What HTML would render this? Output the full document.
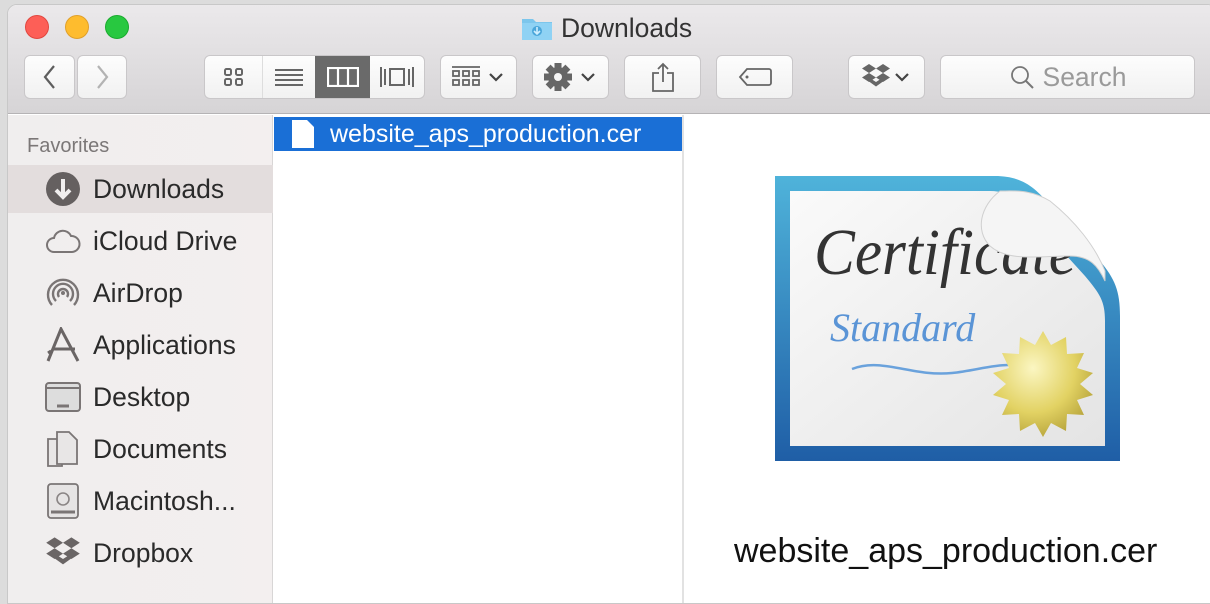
<!DOCTYPE html>
<html><head><meta charset="utf-8">
<style>
*{margin:0;padding:0;box-sizing:border-box}
body{width:1210px;height:584px;overflow:hidden;background:#dcdcdc;font-family:"Liberation Sans",sans-serif;position:relative}
.win{position:absolute;left:7px;top:4px;width:1210px;height:600px;border-radius:10px 10px 0 0;background:#fff;overflow:hidden;border:1px solid #c8c8c8}
.tb{position:absolute;left:0;top:0;width:100%;height:109px;background:linear-gradient(#ebe9eb,#d6d4d6);border-bottom:1px solid #b5b3b5}
.dot{position:absolute;top:10px;width:24px;height:24px;border-radius:50%}
.btn{position:absolute;top:50px;height:44px;background:linear-gradient(#fdfdfd,#f1f1f1);border:1px solid #c9c7c9;border-radius:6px;display:flex;align-items:center;justify-content:center}
.abs{position:absolute}
.side{position:absolute;left:0;top:110px;width:265px;height:500px;background:linear-gradient(90deg,#f0eeee,#f3efef);border-right:1px solid #d8d6d6}
.it{position:absolute;left:0;width:265px;height:48px;display:flex;align-items:center;font-size:26.5px;color:#2a2a2a}
.it svg{position:absolute;left:37px}
.it span{position:absolute;left:85px}
</style></head><body>
<div class="win">
<div class="tb">
 <div class="dot" style="left:17px;background:#fd5f57;border:1px solid #e1473f"></div>
 <div class="dot" style="left:57px;background:#febc2e;border:1px solid #e0a02a"></div>
 <div class="dot" style="left:97px;background:#28c840;border:1px solid #1aab2e"></div>
 <svg class="abs" style="left:513px;top:10px" width="32" height="26" viewBox="0 0 32 26"><path d="M1 4h11l3 3h16v18H1z" fill="#7cc6ec"/><rect x="1" y="8" width="30" height="17" fill="#8fd2f4"/><circle cx="16" cy="16" r="5" fill="#4aa6da"/><path d="M16 12v7M13 16l3 3 3-3" stroke="#cfeeff" stroke-width="1.6" fill="none"/></svg>
 <div class="abs" style="left:553px;top:8px;font-size:26.5px;color:#333">Downloads</div>

 <div class="btn" style="left:16px;width:51px"><svg width="16" height="26"><path d="M12 2L3 13l9 11" stroke="#5e5e5e" stroke-width="2.2" fill="none"/></svg></div>
 <div class="btn" style="left:69px;width:50px"><svg width="16" height="26"><path d="M4 2l9 11-9 11" stroke="#b3b3b3" stroke-width="2.2" fill="none"/></svg></div>

 <div class="btn" style="left:196px;width:221px;overflow:hidden;justify-content:flex-start">
  <div style="width:59px;height:44px;display:flex;align-items:center;justify-content:center;border-right:1px solid #ddd"><svg width="22" height="20"><g fill="none" stroke="#666" stroke-width="2"><rect x="2" y="2" width="6" height="6" rx="1.5"/><rect x="13" y="2" width="6" height="6" rx="1.5"/><rect x="2" y="12" width="6" height="6" rx="1.5"/><rect x="13" y="12" width="6" height="6" rx="1.5"/></g></svg></div>
  <div style="width:52px;height:44px;display:flex;align-items:center;justify-content:center"><svg width="28" height="20"><g stroke="#666" stroke-width="2"><path d="M0 3h28M0 8h28M0 13h28M0 18h28"/></g></svg></div>
  <div style="width:56px;height:44px;background:#6a6a6a;display:flex;align-items:center;justify-content:center"><svg width="32" height="20"><g fill="none" stroke="#fff" stroke-width="2.2"><rect x="1" y="1" width="30" height="18"/><path d="M11 1v18M21 1v18"/></g></svg></div>
  <div style="width:54px;height:44px;display:flex;align-items:center;justify-content:center"><svg width="36" height="24"><g fill="none" stroke="#666" stroke-width="2"><rect x="11" y="4" width="14" height="16"/><path d="M2 2v20M6 4v16M30 4v16M34 2v20"/></g></svg></div>
 </div>
 <div class="btn" style="left:432px;width:77px"><svg width="30" height="24"><g fill="none" stroke="#666" stroke-width="1.8"><path d="M1 2h28"/><rect x="2" y="6" width="6" height="5"/><rect x="12" y="6" width="6" height="5"/><rect x="22" y="6" width="6" height="5"/><rect x="2" y="15" width="6" height="5"/><rect x="12" y="15" width="6" height="5"/><rect x="22" y="15" width="6" height="5"/></g></svg><svg width="20" height="12" style="margin-left:6px"><path d="M3 3l6 6 6-6" stroke="#444" stroke-width="2.2" fill="none"/></svg></div>
 <div class="btn" style="left:524px;width:77px"><svg width="30" height="30" viewBox="-15 -15 30 30"><g fill="#666"><circle r="10"/><rect x="-3.5" y="-14" width="7" height="28"/><rect x="-3.5" y="-14" width="7" height="28" transform="rotate(45)"/><rect x="-3.5" y="-14" width="7" height="28" transform="rotate(90)"/><rect x="-3.5" y="-14" width="7" height="28" transform="rotate(135)"/></g><circle r="4" fill="#f5f5f5"/></svg><svg width="20" height="12" style="margin-left:6px"><path d="M3 3l6 6 6-6" stroke="#444" stroke-width="2.2" fill="none"/></svg></div>
 <div class="btn" style="left:616px;width:77px"><svg width="24" height="30"><g fill="none" stroke="#666" stroke-width="1.8"><path d="M8 11H2v18h20V11h-6M12 20V2M7 7l5-5 5 5"/></g></svg></div>
 <div class="btn" style="left:708px;width:77px"><svg width="34" height="20"><path d="M9 2h22a2 2 0 0 1 2 2v12a2 2 0 0 1-2 2H9L2 10z" fill="none" stroke="#666" stroke-width="1.8"/><circle cx="9" cy="10" r="1.5" fill="#666"/></svg></div>
 <div class="btn" style="left:840px;width:77px"><svg width="30" height="28" viewBox="0 0 30 28"><g fill="#666"><path d="M8 1l7 4.5-7 4.5-7-4.5zM22 1l7 4.5-7 4.5-7-4.5zM8 10l7 4.5-7 4.5-7-4.5zM22 10l7 4.5-7 4.5-7-4.5zM15 19l7-4.5 0 4-7 5-7-5 0-4z"/></g></svg><svg width="20" height="12" style="margin-left:2px"><path d="M3 3l6 6 6-6" stroke="#444" stroke-width="2.2" fill="none"/></svg></div>
 <div class="btn" style="left:932px;width:255px"><svg width="26" height="26"><circle cx="11" cy="11" r="8" fill="none" stroke="#777" stroke-width="1.8"/><path d="M17 17l7 7" stroke="#777" stroke-width="2"/></svg><span style="font-size:26.5px;color:#9a9a9a;margin-left:8px">Search</span></div>
</div>

<div class="side">
 <div class="abs" style="left:19px;top:20px;font-size:20px;color:#7b7777">Favorites</div>
 <div class="it" style="top:50px;background:#e3dddd"><svg width="36" height="36"><circle cx="18" cy="18" r="17" fill="#656060"/><path d="M18 8v18M11 19l7 7 7-7" stroke="#f0eeee" stroke-width="4" fill="none"/></svg><span>Downloads</span></div>
 <div class="it" style="top:102px"><svg width="36" height="36"><path d="M9 29a7 7 0 0 1 0-14 9 9 0 0 1 17-2 8 8 0 0 1 1 16z" fill="none" stroke="#7a7575" stroke-width="2"/></svg><span>iCloud Drive</span></div>
 <div class="it" style="top:154px"><svg width="36" height="36"><g fill="none" stroke="#7a7575" stroke-width="2.4"><path d="M7 30a15 15 0 1 1 22 0"/><path d="M11 26a10 10 0 1 1 14 0"/><path d="M14 22a5 5 0 1 1 8 0"/></g><circle cx="18" cy="18" r="2" fill="#7a7575"/></svg><span>AirDrop</span></div>
 <div class="it" style="top:206px"><svg width="36" height="36"><g stroke="#6a6565" stroke-width="3" fill="none"><path d="M3 34L16 2l17 32M8 22h22M3 26l3-2"/></g></svg><span>Applications</span></div>
 <div class="it" style="top:258px"><svg width="36" height="36"><rect x="1" y="4" width="34" height="28" rx="3" fill="#ddd" stroke="#7a7575" stroke-width="2"/><path d="M2 9h32" stroke="#7a7575" stroke-width="2"/><path d="M12 27h12" stroke="#7a7575" stroke-width="3"/></svg><span>Desktop</span></div>
 <div class="it" style="top:310px"><svg width="36" height="36"><g fill="#e8e6e6" stroke="#7a7575" stroke-width="1.8"><path d="M3 8h14v27H3z"/><path d="M12 1h12l8 8v24H12z"/></g></svg><span>Documents</span></div>
 <div class="it" style="top:362px"><svg width="36" height="36"><rect x="3" y="1" width="30" height="34" rx="3" fill="#e6e4e4" stroke="#7a7575" stroke-width="1.8"/><circle cx="18" cy="16" r="6" fill="none" stroke="#8a8585" stroke-width="1.6"/><path d="M6 29h24" stroke="#7a7575" stroke-width="3"/></svg><span>Macintosh...</span></div>
 <div class="it" style="top:414px"><svg width="36" height="36" viewBox="0 0 30 28"><g fill="#6a6565"><path d="M8 1l7 4.5-7 4.5-7-4.5zM22 1l7 4.5-7 4.5-7-4.5zM8 10l7 4.5-7 4.5-7-4.5zM22 10l7 4.5-7 4.5-7-4.5zM15 19l7-4.5 0 4-7 5-7-5 0-4z"/></g></svg><span>Dropbox</span></div>
</div>

<div class="abs" style="left:266px;top:112px;width:408px;height:34px;background:#1a6fd6"></div>
<svg class="abs" style="left:283px;top:114px" width="24" height="30"><path d="M1 1h15l7 7v21H1z" fill="#fff"/></svg>
<div class="abs" style="left:322px;top:115px;font-size:25px;color:#fff">website_aps_production.cer</div>
<div class="abs" style="left:674px;top:110px;width:2px;height:500px;background:#e2e2e2"></div>

<svg class="abs" style="left:752px;top:161px" width="380" height="310" viewBox="760 165 380 310">
 <defs>
  <linearGradient id="bl" x1="0" y1="0" x2="0" y2="1"><stop offset="0" stop-color="#4fb3da"/><stop offset="1" stop-color="#1f5ea6"/></linearGradient>
  <linearGradient id="pp" x1="0" y1="0" x2="1" y2="1"><stop offset="0" stop-color="#fafafa"/><stop offset="1" stop-color="#e4e4e4"/></linearGradient>
  <radialGradient id="gd" cx=".4" cy=".35" r=".7"><stop offset="0" stop-color="#fbf6c2"/><stop offset=".6" stop-color="#e2d263"/><stop offset="1" stop-color="#b5a23a"/></radialGradient>
 </defs>
 <path d="M775 175h220c25 0 40 10 55 30l50 55c15 18 20 30 20 55v145H775z" fill="url(#bl)"/>
 <path d="M790 190h200c20 0 30 10 45 30l50 55c15 18 20 25 20 45v125H790z" fill="url(#pp)"/>
 <text x="814" y="273" font-family="Liberation Serif,serif" font-style="italic" font-size="66" fill="#333" textLength="262" lengthAdjust="spacingAndGlyphs">Certificate</text>
 <path d="M1000 190c-20 15-25 40-10 55 18 16 50 10 80 10 20 0 28 10 35 25l0-10c-10-25-30-50-55-70-20-12-35-10-50-10z" fill="#f5f5f5" stroke="#d0d0d0"/>
 <text x="830" y="340" font-family="Liberation Serif,serif" font-style="italic" font-size="40" fill="#5a94d6">Standard</text>
 <path d="M852 368c30-12 60 8 100 4 20-2 40-8 56-8" stroke="#6aa2dc" stroke-width="2.5" fill="none"/>
 <polygon fill="url(#gd)" transform="translate(0,6)" points="1043,324 1051,338 1066,330 1067,347 1084,346 1077,361 1093,366 1080,377 1093,388 1077,393 1084,408 1067,407 1066,424 1051,416 1043,430 1035,416 1020,424 1019,407 1002,408 1009,393 993,388 1006,377 993,366 1009,361 1002,346 1019,347 1020,330 1035,338"/>
</svg>
<div class="abs" style="left:726px;top:527px;font-size:34px;color:#111">website_aps_production.cer</div>
</div>
</body></html>
